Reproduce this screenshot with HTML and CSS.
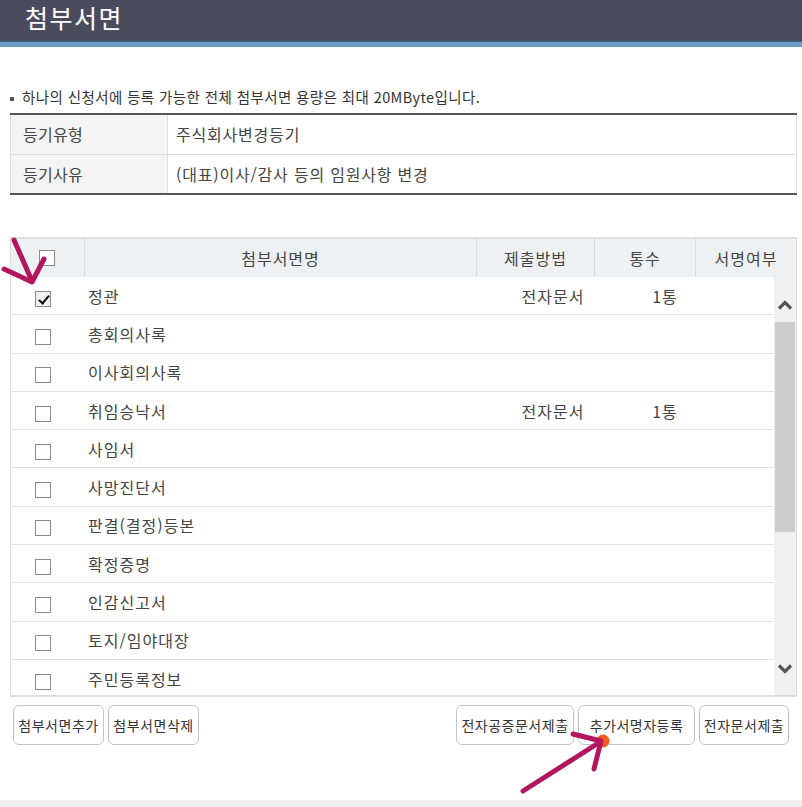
FILE: index.html
```html
<!DOCTYPE html>
<html lang="ko">
<head>
  <meta charset="UTF-8" />
  <meta name="viewport" content="width=device-width, initial-scale=1.0"/>
  <title>첨부서면</title>
  <link rel="stylesheet" href="styles.css">
</head>
<body>

  <div class="page-title">
    <h1>첨부서면</h1>
  </div>

  <div class="content">
    <p class="notice">하나의 신청서에 등록 가능한 전체 첨부서면 용량은 최대 20MByte입니다.</p>

    <table class="info">
      <tr>
        <th>등기유형</th>
        <td>주식회사변경등기</td>
      </tr>
      <tr>
        <th>등기사유</th>
        <td>(대표)이사/감사 등의 임원사항 변경</td>
      </tr>
    </table>

    <div class="doc-table">
      <div class="doc-head">
        <div class="cell cell-chk"><span class="chk"></span></div>
        <div class="cell">첨부서면명</div>
        <div class="cell">제출방법</div>
        <div class="cell">통수</div>
        <div class="cell">서명여부</div>
      </div>

      <div class="doc-body">
        <div class="doc-rows">
          <div class="row">
            <div class="col-chk"><span class="chk on"></span></div>
            <div class="col-name">정관</div>
            <div class="col-mid">전자문서</div>
            <div class="col-mid">1통</div>
            <div></div>
          </div>
          <div class="row">
            <div class="col-chk"><span class="chk"></span></div>
            <div class="col-name">총회의사록</div>
            <div></div><div></div><div></div>
          </div>
          <div class="row">
            <div class="col-chk"><span class="chk"></span></div>
            <div class="col-name">이사회의사록</div>
            <div></div><div></div><div></div>
          </div>
          <div class="row">
            <div class="col-chk"><span class="chk"></span></div>
            <div class="col-name">취임승낙서</div>
            <div class="col-mid">전자문서</div>
            <div class="col-mid">1통</div>
            <div></div>
          </div>
          <div class="row">
            <div class="col-chk"><span class="chk"></span></div>
            <div class="col-name">사임서</div>
            <div></div><div></div><div></div>
          </div>
          <div class="row">
            <div class="col-chk"><span class="chk"></span></div>
            <div class="col-name">사망진단서</div>
            <div></div><div></div><div></div>
          </div>
          <div class="row">
            <div class="col-chk"><span class="chk"></span></div>
            <div class="col-name">판결(결정)등본</div>
            <div></div><div></div><div></div>
          </div>
          <div class="row">
            <div class="col-chk"><span class="chk"></span></div>
            <div class="col-name">확정증명</div>
            <div></div><div></div><div></div>
          </div>
          <div class="row">
            <div class="col-chk"><span class="chk"></span></div>
            <div class="col-name">인감신고서</div>
            <div></div><div></div><div></div>
          </div>
          <div class="row">
            <div class="col-chk"><span class="chk"></span></div>
            <div class="col-name">토지/임야대장</div>
            <div></div><div></div><div></div>
          </div>
          <div class="row">
            <div class="col-chk"><span class="chk"></span></div>
            <div class="col-name">주민등록정보</div>
            <div></div><div></div><div></div>
          </div>
        </div>

        <div class="scrollbar">
          <div class="sb-up">
            <svg width="16" height="10" viewBox="0 0 16 10"><path d="M2 8.5 L8 2.5 L14 8.5" fill="none" stroke="#555" stroke-width="3.2"/></svg>
          </div>
          <div class="sb-thumb"></div>
          <div class="sb-fill"></div>
          <div class="sb-down">
            <svg width="16" height="10" viewBox="0 0 16 10"><path d="M2 1.5 L8 7.5 L14 1.5" fill="none" stroke="#555" stroke-width="3.2"/></svg>
          </div>
        </div>
      </div>
    </div>

    <div class="actions">
      <div class="btn-group">
        <button class="btn-91">첨부서면추가</button>
        <button class="btn-91">첨부서면삭제</button>
      </div>
      <div class="btn-group">
        <button class="btn-118">전자공증문서제출</button>
        <button class="btn-117">추가서명자등록</button>
        <button class="btn-90">전자문서제출</button>
      </div>
    </div>
  </div>

  <div class="footer-bar"></div>

  <!-- hand-drawn annotation arrows over the page -->
  <svg class="marks" width="802" height="807" viewBox="0 0 802 807">
    <g fill="none" stroke="#b3165e" stroke-width="5" stroke-linecap="round" stroke-linejoin="round">
      <path d="M14 240 L32 281"/>
      <path d="M4 269 L32 282 L44 259"/>
    </g>
    <circle cx="603" cy="741" r="6.5" fill="#f05a1e"/>
    <g fill="none" stroke="#b3165e" stroke-width="5" stroke-linecap="round" stroke-linejoin="round">
      <path d="M523 791 L600 742"/>
      <path d="M573 734 L601 741 L594 769"/>
    </g>
  </svg>

</body>
</html>
```

FILE: styles.css
```css
* {
  box-sizing: border-box;
}

html, body {
  margin: 0;
}

body {
  font-family: "Noto Sans CJK KR", "Noto Sans", sans-serif;
  color: #444;
  background-color: #fff;
  position: relative;
  height: 807px;
  overflow: hidden;
}

.page-title {
  height: 47px;
  padding: 0 0 0 25px;
  background-color: #4b4b5e;
  border-bottom: 5px solid #6b9cc4;
  box-shadow: inset 0 -1px 0 #3f5e84;
}

.page-title h1 {
  margin: 0;
  font-size: 25px;
  font-weight: normal;
  letter-spacing: 1.5px;
  line-height: 34px;
  color: #fff;
}

.content {
  padding: 0 5px 0 10px;
}

.notice {
  margin: 40px 0 6px;
  font-size: 14.5px;
  letter-spacing: 0.4px;
  line-height: 20px;
  color: #333;
}

.notice::before {
  content: '';
  display: inline-block;
  width: 4px;
  height: 4px;
  margin-right: 8px;
  vertical-align: middle;
  background-color: #555;
}

/* registration summary */
.info {
  width: 100%;
  border-collapse: collapse;
  border-top: 2px solid #555;
  border-bottom: 2px solid #555;
  font-size: 16px;
  letter-spacing: 0.8px;
}

.info th, .info td {
  height: 40px;
  border: 1px solid #dcdcdc;
  text-align: left;
  font-weight: normal;
  line-height: 20px;
}

.info th {
  width: 157px;
  padding: 0 12px;
  background-color: #f4f4f4;
  letter-spacing: 0.3px;
}

.info td {
  padding: 0 8px;
}

/* attachment list */
.doc-table {
  margin-top: 42px;
  border: 1px solid #dcdcdc;
  border-top: 2px solid #dde0e3;
  border-bottom: none;
}

.doc-head {
  display: grid;
  grid-template-columns: 73px 1fr 118px 101px 101px;
  height: 38px;
  background-color: #eef1f4;
  font-size: 16px;
  letter-spacing: 1px;
}

.doc-head .cell {
  display: flex;
  align-items: center;
  justify-content: center;
  border-left: 1px solid #d6dbe0;
}

.doc-head .cell-chk {
  border-left: none;
  justify-content: flex-start;
  padding-left: 28px;
}

.doc-body {
  display: flex;
  height: 420px;
  border-bottom: 2px solid #dcdcdc;
}

.doc-rows {
  flex: 1;
  overflow: hidden;
}

.row {
  display: grid;
  grid-template-columns: 73px 1fr 110px 114px 52px;
  align-items: center;
  height: 38.3px;
  border-bottom: 1.5px solid #e2e2e2;
  font-size: 16px;
  letter-spacing: 1px;
  line-height: 20px;
}

.col-chk {
  padding-left: 24px;
  padding-top: 6px;
}

.col-name {
  padding-left: 4px;
}

.col-mid {
  text-align: center;
}

.chk {
  display: block;
  width: 16px;
  height: 16px;
  border: 1px solid #8a8a8a;
  background-color: #fff;
  position: relative;
}

.chk.on {
  background-color: #f0f0f0;
}

.chk.on::after {
  content: '';
  position: absolute;
  left: 5px;
  top: 1px;
  width: 4px;
  height: 9px;
  border-right: 2.5px solid #111;
  border-bottom: 2.5px solid #111;
  transform: rotate(40deg);
}

/* scrollbar drawn as part of the list */
.scrollbar {
  width: 22px;
  display: flex;
  flex-direction: column;
  background-color: #f0f0f0;
}

.sb-up {
  height: 45px;
  display: flex;
  align-items: flex-end;
  justify-content: center;
  padding-bottom: 12px;
}

.sb-thumb {
  height: 210px;
  margin: 0 1px;
  background-color: #cdcdcd;
}

.sb-fill {
  flex: 1;
}

.sb-down {
  height: 45px;
  display: flex;
  align-items: flex-start;
  justify-content: center;
  padding-top: 14px;
}

.sb-up svg, .sb-down svg {
  display: block;
}

/* buttons */
.actions {
  display: flex;
  justify-content: space-between;
  margin-top: 8px;
  padding: 0 8px 0 3px;
}

.btn-group {
  display: flex;
  gap: 4px;
}

button {
  flex: none;
  height: 40px;
  padding: 0;
  border: 1px solid #c4c4c4;
  border-radius: 6px;
  background-color: #fff;
  font-family: inherit;
  font-size: 14px;
  letter-spacing: 0.5px;
  white-space: nowrap;
  color: #333;
  cursor: pointer;
}

.btn-91 { width: 91px; }
.btn-118 { width: 118px; }
.btn-117 { width: 117px; }
.btn-90 { width: 90px; }

.footer-bar {
  position: absolute;
  left: 0;
  right: 0;
  bottom: 0;
  height: 7px;
  background-color: #eeeeee;
}

.marks {
  position: absolute;
  top: 0;
  left: 0;
  pointer-events: none;
}
```
